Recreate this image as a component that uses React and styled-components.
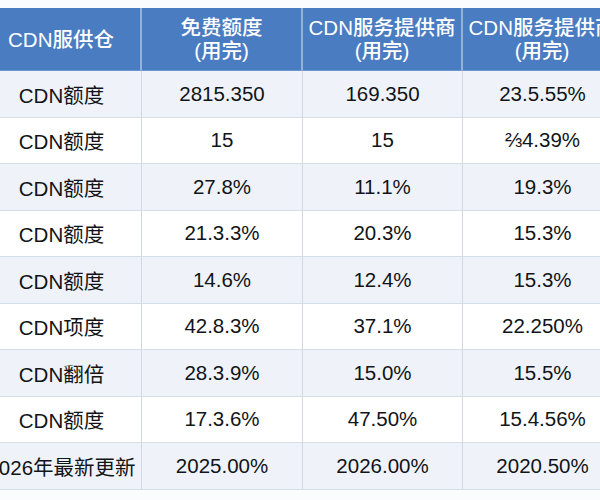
import React from 'react';
import styled, { createGlobalStyle } from 'styled-components';

const GlobalStyle = createGlobalStyle`
  html, body {
    margin: 0;
    padding: 0;
    background: #fbfcfd;
  }
  body {
    font-family: "Liberation Sans", "Noto Sans CJK SC", "Noto Sans", sans-serif;
  }
`

const Page = styled.div`
  width: 600px;
  height: 500px;
  overflow: hidden;
  padding-top: 8px;
  box-sizing: border-box;
`

const Grid = styled.div`
  display: grid;
  grid-template-columns: 160px 161px 160px 160px;
  grid-template-rows: 63px;
  grid-auto-rows: 46.5px;
  margin-left: -18px;
  width: 641px;
`

const HeadCell = styled.div`
  display: flex;
  align-items: center;
  justify-content: center;
  text-align: center;
  background: #4a7cc2;
  color: #fff;
  font-size: 20.5px;
  font-weight: 500;
  line-height: 23px;
  white-space: nowrap;
  border-right: 2px solid #93b2dc;
  border-bottom: 1px solid #6f97cf;
`

const Cell = styled.div`
  display: flex;
  align-items: center;
  justify-content: center;
  background: ${p => (p.$alt ? '#eff3f9' : '#ffffff')};
  color: #111418;
  font-size: 20.5px;
  white-space: nowrap;
  border-right: 1px solid #cfd9e5;
  border-bottom: 1px solid #d6dee8;
`

const headers = [
  ['CDN服供仓'],
  ['免费额度', '(用完)'],
  ['CDN服务提供商', '(用完)'],
  ['CDN服务提供商', '(用完)'],
];

const rows = [
  ['CDN额度', '2815.350', '169.350', '23.5.55%'],
  ['CDN额度', '15', '15', '⅔4.39%'],
  ['CDN额度', '27.8%', '11.1%', '19.3%'],
  ['CDN额度', '21.3.3%', '20.3%', '15.3%'],
  ['CDN额度', '14.6%', '12.4%', '15.3%'],
  ['CDN项度', '42.8.3%', '37.1%', '22.250%'],
  ['CDN翻倍', '28.3.9%', '15.0%', '15.5%'],
  ['CDN额度', '17.3.6%', '47.50%', '15.4.56%'],
  ['2026年最新更新', '2025.00%', '2026.00%', '2020.50%'],
];

export default function App() {
  return (
    <Page>
      <GlobalStyle />
      <Grid>
        {headers.map((h, i) => (
          <HeadCell key={'h' + i}>
            <div>
              {h.map((line, j) => <div key={j}>{line}</div>)}
            </div>
          </HeadCell>
        ))}
        {rows.map((r, i) =>
          r.map((v, j) => (
            <Cell key={i + '-' + j} $alt={i % 2 === 0}>{v}</Cell>
          ))
        )}
      </Grid>
    </Page>
  );
}
